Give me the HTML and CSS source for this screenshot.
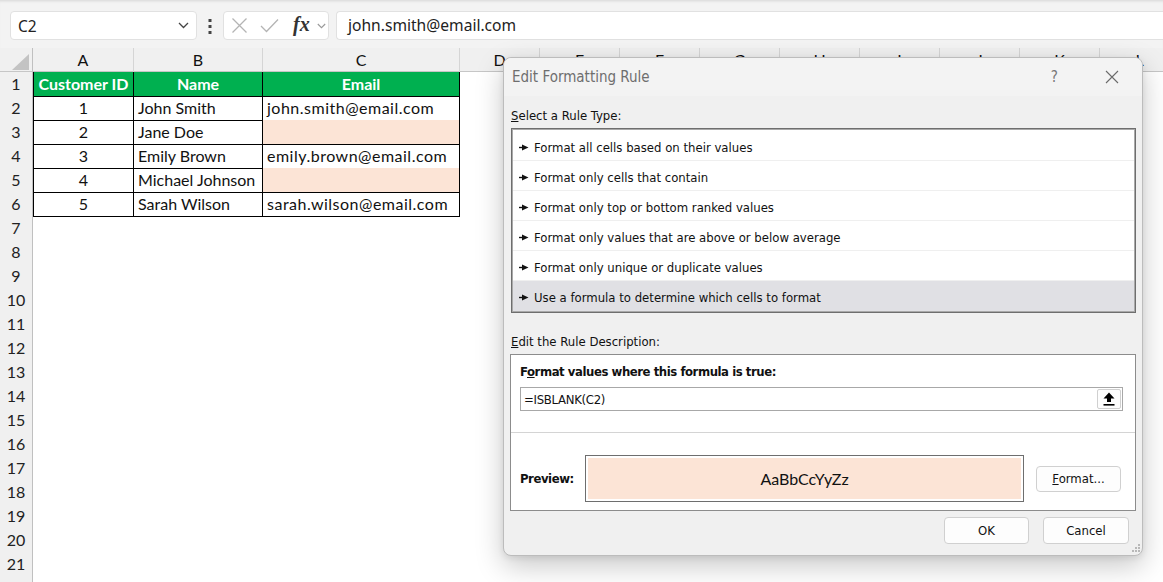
FILE: index.html
```html
<!DOCTYPE html>
<html lang="en">
<head>
    <meta charset="UTF-8">
    <meta name="viewport" content="width=device-width, initial-scale=1.0">
    <title>Edit Formatting Rule</title>
    <link rel="stylesheet" href="styles.css">
</head>
<body>
    <!-- Formula bar -->
    <div class="formula-bar">
        <div class="name-box">
            <span>C2</span>
            <svg class="chevron" width="11" height="7" viewBox="0 0 11 7"><path d="M1 1l4.5 4.5L10 1" fill="none" stroke="#444" stroke-width="1.3"/></svg>
        </div>
        <svg class="more" width="4" height="15" viewBox="0 0 4 15">
            <rect x="0.5" y="0" width="3" height="3" fill="#444"/>
            <rect x="0.5" y="6" width="3" height="3" fill="#444"/>
            <rect x="0.5" y="12" width="3" height="3" fill="#444"/>
        </svg>
        <div class="fx-box">
            <svg class="ic-cancel" width="17" height="17" viewBox="0 0 17 17"><path d="M1.5 1.5l14 14M15.5 1.5l-14 14" stroke="#b4b4b4" stroke-width="1.3" fill="none"/></svg>
            <svg class="ic-enter" width="19" height="15" viewBox="0 0 19 15"><path d="M1 8l5.5 5.5L18 1.5" stroke="#b4b4b4" stroke-width="1.3" fill="none"/></svg>
            <span class="fx">fx</span>
            <svg class="ic-drop" width="9" height="6" viewBox="0 0 9 6"><path d="M0.8 1l3.7 3.7L8.2 1" fill="none" stroke="#999" stroke-width="1.1"/></svg>
        </div>
        <div class="formula-input">john.smith@email.com</div>
    </div>

    <!-- Sheet -->
    <div class="sheet">
        <div class="col-heads">
            <div class="corner"><svg width="17" height="16" viewBox="0 0 17 16"><polygon points="17,0 17,16 0,16" fill="#c3c3c3"/></svg></div>
            <div>A</div><div>B</div><div>C</div><div>D</div><div>E</div><div>F</div>
            <div>G</div><div>H</div><div>I</div><div>J</div><div>K</div><div>L</div>
        </div>

        <div class="row">
            <div class="rh">1</div>
            <div class="cell head">Customer ID</div>
            <div class="cell head">Name</div>
            <div class="cell head">Email</div>
        </div>
        <div class="row">
            <div class="rh">2</div>
            <div class="cell num">1</div>
            <div class="cell">John Smith</div>
            <div class="cell email">john.smith@email.com</div>
        </div>
        <div class="row">
            <div class="rh">3</div>
            <div class="cell num">2</div>
            <div class="cell">Jane Doe</div>
            <div class="cell blank"></div>
        </div>
        <div class="row">
            <div class="rh">4</div>
            <div class="cell num">3</div>
            <div class="cell">Emily Brown</div>
            <div class="cell email">emily.brown@email.com</div>
        </div>
        <div class="row">
            <div class="rh">5</div>
            <div class="cell num">4</div>
            <div class="cell">Michael Johnson</div>
            <div class="cell blank"></div>
        </div>
        <div class="row">
            <div class="rh">6</div>
            <div class="cell num">5</div>
            <div class="cell">Sarah Wilson</div>
            <div class="cell email">sarah.wilson@email.com</div>
        </div>
        <div class="row"><div class="rh">7</div></div>
        <div class="row"><div class="rh">8</div></div>
        <div class="row"><div class="rh">9</div></div>
        <div class="row"><div class="rh">10</div></div>
        <div class="row"><div class="rh">11</div></div>
        <div class="row"><div class="rh">12</div></div>
        <div class="row"><div class="rh">13</div></div>
        <div class="row"><div class="rh">14</div></div>
        <div class="row"><div class="rh">15</div></div>
        <div class="row"><div class="rh">16</div></div>
        <div class="row"><div class="rh">17</div></div>
        <div class="row"><div class="rh">18</div></div>
        <div class="row"><div class="rh">19</div></div>
        <div class="row"><div class="rh">20</div></div>
        <div class="row"><div class="rh">21</div></div>
        <div class="row"><div class="rh"></div></div>
    </div>

    <!-- Dialog -->
    <div class="dialog">
        <div class="dialog-title">
            <span class="title-text">Edit Formatting Rule</span>
            <span class="help">?</span>
            <svg class="close" width="14" height="14" viewBox="0 0 14 14"><path d="M1 1l12 12M13 1L1 13" stroke="#6a6a6a" stroke-width="1.1" fill="none"/></svg>
        </div>

        <div class="dialog-body">
            <div class="label"><u>S</u>elect a Rule Type:</div>
            <div class="rule-list">
                <div class="rule-item"><svg class="pointer" width="10" height="7" viewBox="0 0 10 7"><path d="M0 3.5h4" stroke="#111" stroke-width="1.4"/><polygon points="3,0.5 9.5,3.5 3,6.5" fill="#111"/></svg>Format all cells based on their values</div>
                <div class="rule-item"><svg class="pointer" width="10" height="7" viewBox="0 0 10 7"><path d="M0 3.5h4" stroke="#111" stroke-width="1.4"/><polygon points="3,0.5 9.5,3.5 3,6.5" fill="#111"/></svg>Format only cells that contain</div>
                <div class="rule-item"><svg class="pointer" width="10" height="7" viewBox="0 0 10 7"><path d="M0 3.5h4" stroke="#111" stroke-width="1.4"/><polygon points="3,0.5 9.5,3.5 3,6.5" fill="#111"/></svg>Format only top or bottom ranked values</div>
                <div class="rule-item"><svg class="pointer" width="10" height="7" viewBox="0 0 10 7"><path d="M0 3.5h4" stroke="#111" stroke-width="1.4"/><polygon points="3,0.5 9.5,3.5 3,6.5" fill="#111"/></svg>Format only values that are above or below average</div>
                <div class="rule-item"><svg class="pointer" width="10" height="7" viewBox="0 0 10 7"><path d="M0 3.5h4" stroke="#111" stroke-width="1.4"/><polygon points="3,0.5 9.5,3.5 3,6.5" fill="#111"/></svg>Format only unique or duplicate values</div>
                <div class="rule-item selected"><svg class="pointer" width="10" height="7" viewBox="0 0 10 7"><path d="M0 3.5h4" stroke="#111" stroke-width="1.4"/><polygon points="3,0.5 9.5,3.5 3,6.5" fill="#111"/></svg>Use a formula to determine which cells to format</div>
            </div>

            <div class="label desc-label"><u>E</u>dit the Rule Description:</div>
            <div class="desc-box">
                <div class="desc-top">
                    <div class="bold-label">F<u>o</u>rmat values where this formula is true:</div>
                    <div class="formula-field">
                        <span>=ISBLANK(C2)</span>
                        <div class="ref-btn">
                            <svg width="12" height="14" viewBox="0 0 12 14"><polygon points="6,0.5 11.5,6.5 8,6.5 8,10 4,10 4,6.5 0.5,6.5" fill="#000"/><rect x="0.5" y="12" width="11" height="1.6" fill="#000"/></svg>
                        </div>
                    </div>
                </div>
                <div class="desc-preview">
                    <div class="bold-label preview-label">Preview:</div>
                    <div class="preview-box"><div class="preview-fill">AaBbCcYyZz</div></div>
                    <button class="btn format-btn"><u>F</u>ormat...</button>
                </div>
            </div>

            <div class="dialog-buttons">
                <button class="btn">OK</button>
                <button class="btn">Cancel</button>
            </div>
        </div>

        <svg class="grip" width="10" height="10" viewBox="0 0 10 10">
            <rect x="7" y="1" width="2" height="2" fill="#b8b8b8"/>
            <rect x="4" y="4" width="2" height="2" fill="#b8b8b8"/>
            <rect x="7" y="4" width="2" height="2" fill="#b8b8b8"/>
            <rect x="1" y="7" width="2" height="2" fill="#b8b8b8"/>
            <rect x="4" y="7" width="2" height="2" fill="#b8b8b8"/>
            <rect x="7" y="7" width="2" height="2" fill="#b8b8b8"/>
        </svg>
    </div>
</body>
</html>
```

FILE: styles.css
```css
body {
    margin: 0;
    padding: 0;
    width: 1163px;
    height: 582px;
    overflow: hidden;
    background-color: #fff;
    font-family: Lato, 'Liberation Sans', sans-serif;
    position: relative;
}

/* ---------- formula bar ---------- */

.formula-bar {
    height: 48px;
    box-sizing: border-box;
    padding: 11px 0 0 10px;
    background-color: #f3f3f3;
    box-shadow: inset 0 3px 3px -2px rgba(0,0,0,0.12);
    display: flex;
    align-items: flex-start;
    font-family: 'Noto Sans', 'Open Sans', sans-serif;
}

.name-box {
    width: 187px;
    height: 29px;
    box-sizing: border-box;
    background-color: #fff;
    border: 1px solid #e1e1e1;
    border-radius: 4px;
    display: flex;
    align-items: center;
    justify-content: space-between;
    padding: 0 7px 0 7px;
    font-size: 15.5px;
    color: #222;
}

.more {
    margin: 8px 0 0 11px;
}

.fx-box {
    margin-left: 11px;
    width: 106px;
    height: 29px;
    box-sizing: border-box;
    background-color: #fff;
    border: 1px solid #e1e1e1;
    border-radius: 4px;
    display: flex;
    align-items: center;
    padding-left: 7px;
}

.ic-enter {
    margin-left: 12px;
}

.fx {
    font-family: 'Liberation Serif', serif;
    font-style: italic;
    font-weight: bold;
    font-size: 20px;
    color: #333;
    margin-left: 14px;
    margin-top: -3px;
}

.ic-drop {
    margin-left: 7px;
}

.formula-input {
    margin-left: 7px;
    flex: 1;
    height: 29px;
    box-sizing: border-box;
    background-color: #fff;
    border: 1px solid #e1e1e1;
    border-right: none;
    border-radius: 4px 0 0 4px;
    padding-left: 11px;
    font-size: 15.6px;
    line-height: 27px;
    color: #222;
}

/* ---------- sheet ---------- */

.sheet {
    font-size: 16px;
    color: #111;
}

.col-heads {
    display: grid;
    grid-template-columns: 33px 101px 129px 197px repeat(9, 80px);
    height: 24px;
    background-color: #f0f0f0;
    border-bottom: 1px solid #c6c6c6;
    box-sizing: border-box;
}

.col-heads div {
    text-align: center;
    line-height: 24px;
    border-right: 1px solid #d5d5d5;
    box-sizing: border-box;
}

.col-heads .corner {
    display: flex;
    align-items: flex-end;
    justify-content: flex-end;
    padding: 0 3px 2px 0;
    border-right: 1px solid #c0c0c0;
}

.row {
    display: grid;
    grid-template-columns: 33px 101px 129px 197px;
    height: 24px;
}

.rh {
    background-color: #f0f0f0;
    border-right: 1px solid #c0c0c0;
    border-bottom: 1px solid #c8c8c8;
    box-sizing: border-box;
    text-align: center;
    line-height: 24px;
    color: #222;
}

.cell {
    border-right: 1px solid #000;
    border-bottom: 1px solid #000;
    box-sizing: border-box;
    padding-left: 4px;
    line-height: 24px;
    white-space: nowrap;
    overflow: hidden;
}

.row .cell:nth-child(2) {
    border-left: 1px solid #000;
}

.cell.head {
    background-color: #00b050;
    color: #fff;
    font-weight: bold;
    text-align: center;
    padding-left: 0;
}

.cell.num {
    text-align: center;
    padding-left: 0;
}

.cell.email {
    letter-spacing: 0.5px;
}

.cell.blank {
    background-color: #fce4d6;
}

/* ---------- dialog ---------- */

.dialog {
    position: absolute;
    left: 503px;
    top: 57px;
    width: 640px;
    height: 499px;
    box-sizing: border-box;
    background-color: #f0f0f0;
    border: 1px solid #bcbcbc;
    border-radius: 8px;
    box-shadow: 0 10px 28px rgba(0,0,0,0.22), 0 2px 6px rgba(0,0,0,0.08);
    font-family: 'Liberation Sans Narrow', 'DejaVu Sans Condensed', 'Liberation Sans', sans-serif;
    font-size: 13px;
    color: #111;
}

.dialog-title {
    height: 38px;
    background-color: #f3f3f3;
    border-radius: 8px 8px 0 0;
    display: flex;
    align-items: center;
    padding-left: 8px;
}

.title-text {
    font-size: 15px;
    color: #6e6e6e;
    flex: 1;
}

.help {
    font-size: 15px;
    color: #777;
    margin-right: 47px;
}

.close {
    margin-right: 23px;
}

.dialog-body {
    padding: 0 6px 0 7px;
}

.label {
    margin-top: 12px;
    line-height: 16px;
    margin-bottom: 4px;
}

.desc-label {
    margin-top: 21px;
}

.rule-list {
    height: 185px;
    box-sizing: border-box;
    background-color: #fff;
    border: 1px solid #6e6e6e;
    box-shadow: inset 0 0 0 1px #a9a9a9;
    padding: 2px 1px;
}

.rule-item {
    height: 30px;
    box-sizing: border-box;
    border-bottom: 1px solid #efefef;
    display: flex;
    align-items: center;
    padding: 3px 0 0 6px;
}

.rule-item:last-child {
    border-bottom: none;
}

.rule-item.selected {
    background-color: #e0e0e4;
}

.pointer {
    margin-right: 5px;
}

.desc-box {
    height: 157px;
    box-sizing: border-box;
    background-color: #fff;
    border: 1px solid #8c8c8c;
    margin-left: -1px;
}

.desc-top {
    padding: 9px 12px 0 9px;
    height: 78px;
    box-sizing: border-box;
    border-bottom: 1px solid #d4d4d4;
}

.bold-label {
    font-weight: bold;
    line-height: 16px;
    letter-spacing: -0.45px;
}

.formula-field {
    margin-top: 7px;
    height: 24px;
    box-sizing: border-box;
    border: 1px solid #a8a8a8;
    display: flex;
    align-items: center;
    justify-content: space-between;
    padding: 0 1px 0 3px;
    letter-spacing: -0.3px;
}

.ref-btn {
    width: 24px;
    height: 20px;
    box-sizing: border-box;
    border: 1px solid #d0d0d0;
    border-radius: 2px;
    background-color: #fdfdfd;
    display: flex;
    align-items: center;
    justify-content: center;
}

.desc-preview {
    display: flex;
    align-items: center;
    padding: 22px 0 0 9px;
}

.preview-label {
    width: 65px;
}

.preview-box {
    width: 439px;
    height: 47px;
    box-sizing: border-box;
    border: 1px solid #6e6e6e;
    padding: 2px;
}

.preview-fill {
    height: 100%;
    background-color: #fce4d6;
    display: flex;
    align-items: center;
    justify-content: center;
    font-family: Lato, sans-serif;
    font-size: 16px;
    color: #111;
}

.btn {
    font-family: inherit;
    font-size: 13px;
    color: #111;
    background-color: #fdfdfd;
    border: 1px solid #d0d0d0;
    border-radius: 4px;
    width: 85px;
    height: 27px;
    padding: 0;
}

.format-btn {
    margin-left: 12px;
    height: 26px;
}

.dialog-buttons {
    display: flex;
    justify-content: flex-end;
    gap: 14px;
    margin-top: 6px;
    padding-right: 7px;
}

.dialog-buttons .btn:last-child {
    width: 86px;
}

.grip {
    position: absolute;
    right: 1px;
    bottom: 2px;
}
```
